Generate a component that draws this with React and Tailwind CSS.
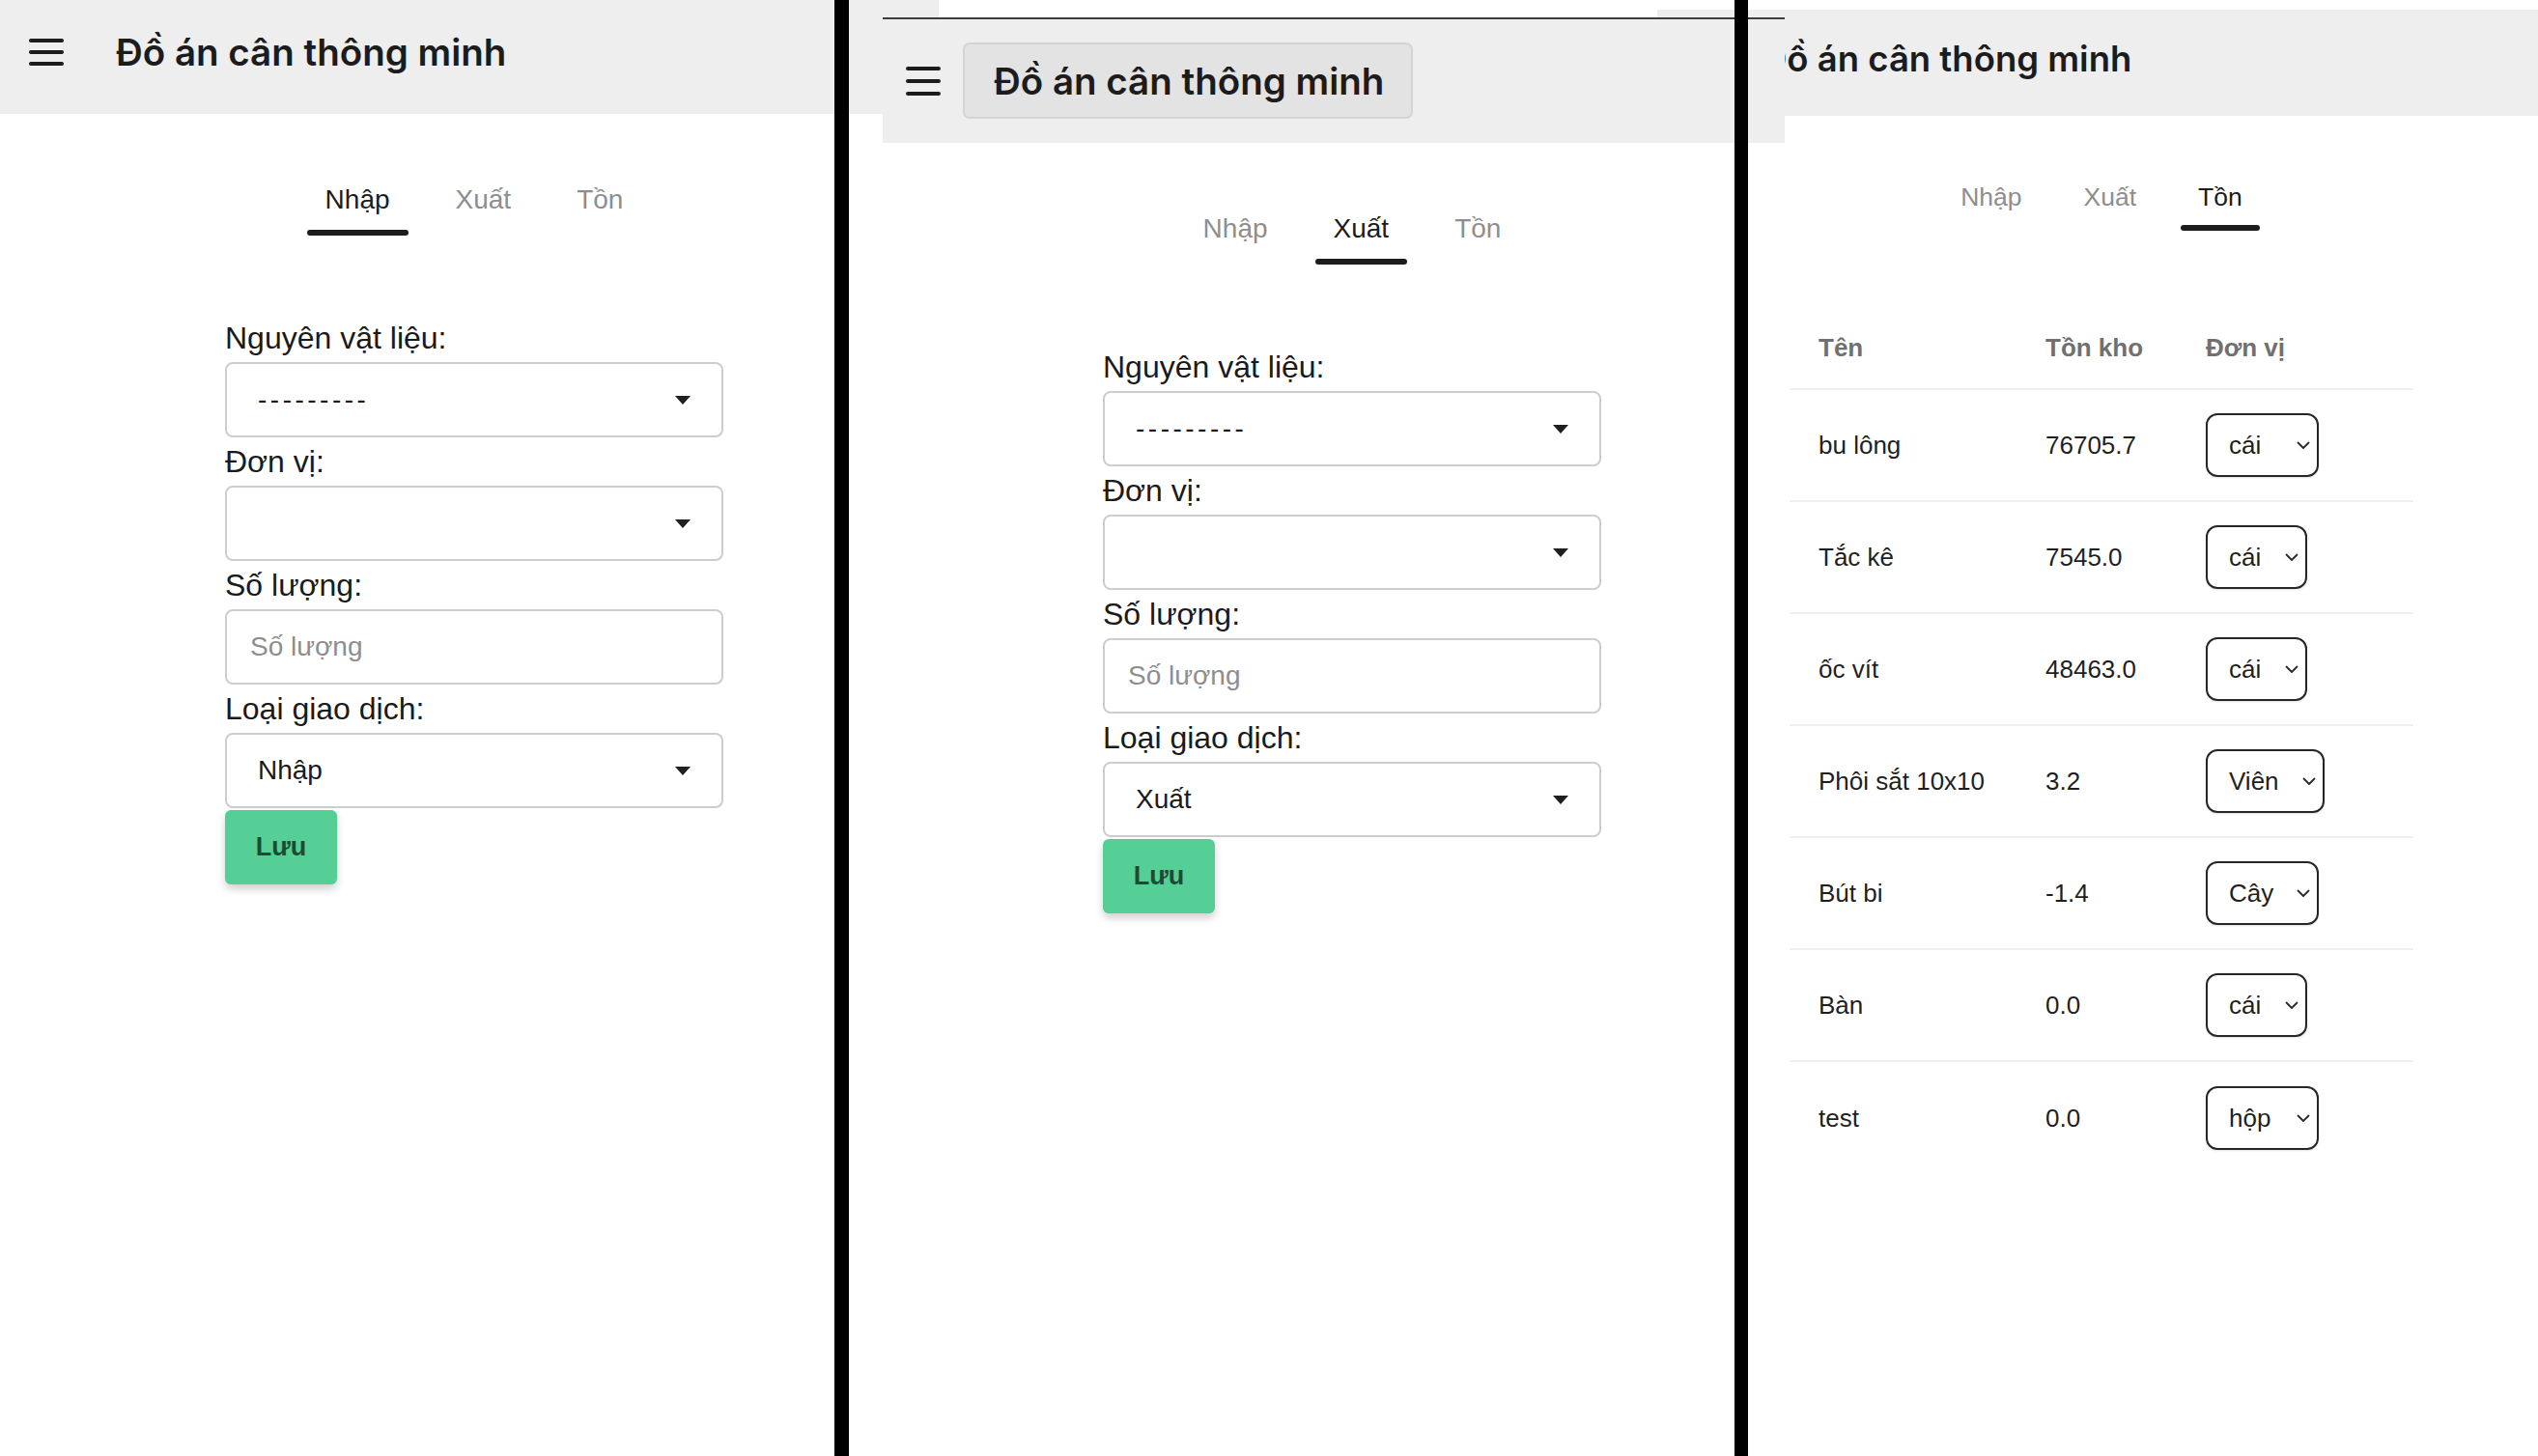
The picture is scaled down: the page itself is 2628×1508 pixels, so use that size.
import React from 'react';

const Hamburger = ({ className }) => (
  <div className={'flex flex-col w-[36px] shrink-0 ' + className}>
    <div className="h-[4px] w-full rounded-full bg-[#1c1c1c]" />
    <div className="h-[4px] w-full rounded-full bg-[#1c1c1c]" />
    <div className="h-[4px] w-full rounded-full bg-[#1c1c1c]" />
  </div>
);

const Caret = () => (
  <svg width="16" height="9" viewBox="0 0 16 9" className="shrink-0">
    <polygon points="0,0 16,0 8,9" fill="#1f1f1f" />
  </svg>
);

const Chevron = () => (
  <svg width="14" height="9" viewBox="0 0 14 9" className="shrink-0">
    <polyline points="1.5,1.5 7,7 12.5,1.5" fill="none" stroke="#2a2a2a" strokeWidth="1.8" strokeLinecap="round" strokeLinejoin="round" />
  </svg>
);

function Tabs({ active, small }) {
  const tabs = ['Nhập', 'Xuất', 'Tồn'];
  return (
    <div className={small ? 'flex justify-center gap-[28px]' : 'flex justify-center gap-[30px]'}>
      {tabs.map((t) => (
        <div key={t} className="flex flex-col">
          <div
            className={
              (small ? 'px-[18px] text-[26.5px] leading-[26px]' : 'px-[19px] text-[28px] leading-[28px]') +
              (t === active ? ' text-[#1c1c1c]' : ' text-[#8e8e8e]')
            }
          >
            {t}
          </div>
          <div
            className={
              (small ? 'mt-[16px]' : 'mt-[17px]') +
              ' h-[6px] rounded-full ' +
              (t === active ? 'bg-[#1c1c1c]' : 'bg-transparent')
            }
          />
        </div>
      ))}
    </div>
  );
}

const Label = ({ children }) => (
  <div className="h-[50px] text-[32px] leading-[50px] text-[#1a1a1a] whitespace-nowrap">{children}</div>
);

const SelectBox = ({ children }) => (
  <div className="h-[78px] border-2 border-[#cdcdcd] rounded-[8px] flex items-center justify-between pl-[32px] pr-[32px] text-[28px] text-[#1a1a1a]">
    <span>{children}</span>
    <Caret />
  </div>
);

function Form({ kind }) {
  return (
    <div className="flex flex-col w-[516px]">
      <Label>Nguyên vật liệu:</Label>
      <SelectBox>
        <span className="tracking-[3.5px]">---------</span>
      </SelectBox>
      <Label>Đơn vị:</Label>
      <SelectBox>{''}</SelectBox>
      <Label>Số lượng:</Label>
      <div className="h-[78px] border-2 border-[#cdcdcd] rounded-[8px] flex items-center pl-[24px] text-[28px] text-[#8e8e8e]">
        Số lượng
      </div>
      <Label>Loại giao dịch:</Label>
      <SelectBox>{kind}</SelectBox>
      <div className="mt-[2px] w-[116px] h-[77px] rounded-[6px] bg-[#55cf95] shadow-[0_5px_8px_rgba(0,0,0,0.18)] flex items-center justify-center text-[27px] font-bold text-[#1e4a34]">
        Lưu
      </div>
    </div>
  );
}

const rows = [
  ['bu lông', '76705.7', 'cái', 'w-[117px]'],
  ['Tắc kê', '7545.0', 'cái', 'w-[105px]'],
  ['ốc vít', '48463.0', 'cái', 'w-[105px]'],
  ['Phôi sắt 10x10', '3.2', 'Viên', 'w-[123px]'],
  ['Bút bi', '-1.4', 'Cây', 'w-[117px]'],
  ['Bàn', '0.0', 'cái', 'w-[105px]'],
  ['test', '0.0', 'hộp', 'w-[117px]'],
];

export default function App() {
  return (
    <div className="w-[2628px] h-[1508px] flex overflow-hidden bg-white font-['Liberation_Sans',Arial,sans-serif]">
      {/* Panel 1 */}
      <div className="w-[864px] shrink-0 flex flex-col">
        <div className="h-[118px] bg-[#eeeeee] flex items-start pt-[35px]">
          <Hamburger className="gap-[8px] mt-[5px] ml-[30px]" />
          <div className="ml-[54px] font-['Inter',sans-serif] text-[38.5px] leading-[38px] font-semibold text-[#1c1c1c] whitespace-nowrap">
            Đồ án cân thông minh
          </div>
        </div>
        <div className="ml-[233px] w-[516px] flex flex-col">
          <div className="mt-[75px]">
            <Tabs active="Nhập" />
          </div>
          <div className="mt-[81px]">
            <Form kind="Nhập" />
          </div>
        </div>
      </div>

      <div className="w-[15px] shrink-0 bg-black" />

      {/* Panel 2 */}
      <div className="w-[917px] shrink-0 flex">
        <div className="w-[35px] shrink-0">
          <div className="h-[118px] bg-[#eeeeee]" />
        </div>
        <div className="w-[882px] shrink-0 flex flex-col">
          <div className="h-[18px] flex justify-between">
            <div className="w-[58px] bg-[#eeeeee]" />
            <div className="w-[80px] mt-[10px] bg-[#eeeeee]" />
          </div>
          <div className="h-[2px] bg-[#3d3d3d]" />
          <div className="h-[128px] bg-[#eeeeee] flex items-start">
            <Hamburger className="gap-[9px] mt-[49px] ml-[24px]" />
            <div className="ml-[23px] mt-[24px] h-[79px] w-[466px] bg-[#e3e3e3] border-2 border-[#d4d4d4] rounded-[7px] flex items-center pl-[30px] font-['Inter',sans-serif] text-[38.5px] leading-[38px] font-semibold text-[#1c1c1c] whitespace-nowrap">
              Đồ án cân thông minh
            </div>
          </div>
          <div className="ml-[228px] w-[516px] flex flex-col">
            <div className="mt-[75px]">
              <Tabs active="Xuất" />
            </div>
            <div className="mt-[81px]">
              <Form kind="Xuất" />
            </div>
          </div>
        </div>
      </div>

      <div className="w-[14px] shrink-0 bg-black" />

      {/* Panel 3 */}
      <div className="flex-1 flex">
        <div className="w-[38px] shrink-0 flex flex-col">
          <div className="h-[10px]" />
          <div className="h-[8px] bg-[#eeeeee]" />
          <div className="h-[2px] bg-[#3d3d3d]" />
          <div className="h-[128px] bg-[#eeeeee]" />
        </div>
        <div className="w-[780px] shrink-0 flex flex-col overflow-hidden">
          <div className="h-[10px]" />
          <div className="h-[110px] bg-[#eeeeee] flex items-start pt-[33px]">
            <div className="ml-[-24px] shrink-0 font-['Inter',sans-serif] text-[36.5px] leading-[36px] font-semibold text-[#1c1c1c] whitespace-nowrap">
              Đồ án cân thông minh
            </div>
          </div>
          <div className="ml-[5px] w-[646px] flex flex-col">
            <div className="mt-[71px]">
              <Tabs active="Tồn" small />
            </div>
            <div className="mt-[79px] flex flex-col text-[26px] text-[#1f1f1f]">
              <div className="h-[86px] border-b-2 border-[#efefef] grid grid-cols-[265px_166px_1fr] items-center font-bold text-[#707070]">
                <div className="pl-[30px]">Tên</div>
                <div>Tồn kho</div>
                <div>Đơn vị</div>
              </div>
              {rows.map(([name, val, unit, w], i) => (
                <div
                  key={name}
                  className={
                    'h-[116px] grid grid-cols-[265px_166px_1fr] items-center' +
                    (i < rows.length - 1 ? ' border-b-2 border-[#efefef]' : '')
                  }
                >
                  <div className="pl-[30px] whitespace-nowrap">{name}</div>
                  <div>{val}</div>
                  <div>
                    <div
                      className={
                        w +
                        ' h-[66px] border-2 border-[#262626] rounded-[12px] flex items-center justify-between pl-[22px] pr-[7px] shadow-[0_1px_2px_rgba(0,0,0,0.12)]'
                      }
                    >
                      <span>{unit}</span>
                      <Chevron />
                    </div>
                  </div>
                </div>
              ))}
            </div>
          </div>
        </div>
      </div>
    </div>
  );
}
